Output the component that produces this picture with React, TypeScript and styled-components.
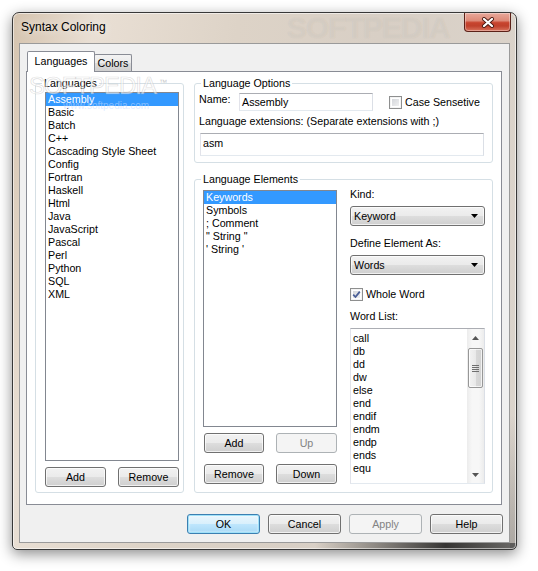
import React from 'react'
import styled, { createGlobalStyle, css } from 'styled-components'

const FACE = '#f0f0f0'

const GlobalStyle = createGlobalStyle`
  * {
    box-sizing: border-box;
  }
  html, body {
    margin: 0;
    padding: 0;
    background: #fff;
  }
  body {
    font-family: "Liberation Sans", Arial, sans-serif;
    font-size: 10.7px;
    color: #000;
  }
`

const Page = styled.div`
  width: 538px;
  height: 571px;
  padding: 12px 0 0 12px;
  overflow: hidden;
`

const Window = styled.div`
  position: relative;
  width: 505px;
  height: 538px;
  display: flex;
  flex-direction: column;
  padding: 0 6px 6px;
  border: 1px solid #383838;
  border-radius: 7px 7px 5px 5px;
  background:
    linear-gradient(90deg, rgba(0, 0, 0, 0) 60%, rgba(25, 25, 25, 0.85) 86%, rgba(70, 70, 70, 0.75) 100%) left bottom / 100% 6px no-repeat,
    linear-gradient(180deg, rgba(255, 255, 255, 0) 75%, rgba(80, 80, 80, 0.35) 100%) right top / 6px 100% no-repeat,
    linear-gradient(100deg, #d5c3ae 0%, #e9dfd4 14%, #ddd3c7 38%, #d8cfc5 62%, #dcd5cd 100%);
  box-shadow: 0 4px 14px rgba(0, 0, 0, 0.45), inset 0 0 0 1px rgba(255, 255, 255, 0.55);
`

const TitleBar = styled.div`
  position: relative;
  height: 30px;
  display: flex;
  align-items: flex-start;
`

const TitleText = styled.div`
  position: relative;
  z-index: 1;
  margin: 7px 0 0 2px;
  font-size: 12px;
  line-height: 15px;
  text-shadow: 0 0 8px rgba(255, 255, 255, 0.9);
`

const TitleMark = styled.div`
  position: absolute;
  left: 268px;
  top: -1px;
  font-size: 30px;
  line-height: 32px;
  font-weight: bold;
  letter-spacing: -1px;
  color: rgba(255, 255, 255, 0.2);
  text-shadow: 0 0 1px rgba(150, 135, 120, 0.22);
  pointer-events: none;
`

const CloseButton = styled.div`
  position: relative;
  z-index: 1;
  margin-left: auto;
  margin-right: -1px;
  width: 47px;
  height: 19px;
  display: flex;
  align-items: center;
  justify-content: center;
  border: 1px solid #5b2118;
  border-top: none;
  border-radius: 0 0 4px 4px;
  background: linear-gradient(180deg, #e9a89a 0%, #dd8a78 42%, #c8442e 54%, #c0412c 72%, #d9735c 100%);
  box-shadow: inset 0 0 0 1px rgba(255, 255, 255, 0.35);
`

const Client = styled.div`
  flex: 1;
  display: flex;
  flex-direction: column;
  background: ${FACE};
  border: 1px solid #9a9a9a;
  padding: 7px 6px 0;
`

const TabStrip = styled.div`
  position: relative;
  z-index: 1;
  height: 20px;
  display: flex;
  align-items: flex-end;
  padding-left: 1px;
`

const Tab = styled.div<{ $active?: boolean; $w: number }>`
  width: ${p => p.$w}px;
  text-align: center;
  border: 1px solid #898c95;
  border-bottom: none;
  border-radius: 2px 2px 0 0;
  ${p =>
    p.$active
      ? css`
          height: 21px;
          margin-bottom: -1px;
          line-height: 19px;
          background: #fff;
        `
      : css`
          height: 17px;
          margin-left: -1px;
          line-height: 16px;
          background: linear-gradient(#f3f3f3 0%, #ebebeb 50%, #dddddd 50%, #cfcfcf 100%);
        `}
`

const TabPanel = styled.div`
  width: 476px;
  height: 434px;
  border: 1px solid #898c95;
  background: #fff;
  padding: 5px 8px 11px;
  display: grid;
  grid-template-columns: 149px 299px;
  column-gap: 10px;
`

const Group = styled.fieldset<{ $pad: string; $row?: boolean; $grow?: boolean }>`
  margin: 0;
  min-width: 0;
  border: 1px solid #d5dfe5;
  border-radius: 3px;
  padding: ${p => p.$pad};
  display: flex;
  flex-direction: ${p => (p.$row ? 'row' : 'column')};
  gap: ${p => (p.$row ? '13px' : '0')};
  flex: ${p => (p.$grow ? 1 : 'none')};
`

const Legend = styled.legend<{ $ml: number }>`
  margin-left: ${p => p.$ml}px;
  padding: 0 2px;
  line-height: 13px;
`

const RightColumn = styled.div`
  display: flex;
  flex-direction: column;
  gap: 10px;
`

const ListBox = styled.div`
  flex: 1;
  border: 1px solid #828790;
  background: #fff;
  overflow: hidden;
`

const ListItem = styled.div<{ $selected?: boolean }>`
  height: 13px;
  line-height: 13px;
  padding-left: 2px;
  white-space: nowrap;
  ${p =>
    p.$selected &&
    css`
      background: #3399ff;
      color: #fff;
    `}
`

const ButtonRow = styled.div<{ $mt: number }>`
  display: flex;
  justify-content: space-between;
  margin-top: ${p => p.$mt}px;
`

const Button = styled.div<{ $w: number; $primary?: boolean; $disabled?: boolean }>`
  width: ${p => p.$w}px;
  height: 20px;
  line-height: 18px;
  text-align: center;
  border: 1px solid #707070;
  border-radius: 3px;
  background: linear-gradient(#f2f2f2 0%, #ebebeb 48%, #dddddd 52%, #cfcfcf 100%);
  box-shadow: inset 0 0 0 1px rgba(255, 255, 255, 0.7);
  ${p =>
    p.$primary &&
    css`
      border-color: #3c7fb1;
      background: linear-gradient(#eaf6fd 0%, #d9f0fc 48%, #bee6fd 52%, #a7d9f5 100%);
      box-shadow: inset 0 0 0 1px #9fe1f9, inset 0 0 2px 1px rgba(255, 255, 255, 0.8);
    `}
  ${p =>
    p.$disabled &&
    css`
      border-color: #adb2b5;
      background: #f4f4f4;
      color: #838383;
      box-shadow: none;
    `}
`

const DialogButtons = styled.div`
  display: flex;
  justify-content: flex-end;
  gap: 8px;
  margin-top: 9px;
`

const FieldRow = styled.div`
  display: flex;
  align-items: center;
  height: 18px;
`

const FieldLabel = styled.div<{ $w?: number; $mt?: number }>`
  ${p => p.$w && `width: ${p.$w}px;`}
  margin-top: ${p => p.$mt ?? 0}px;
  align-self: flex-start;
  line-height: 13px;
  white-space: nowrap;
`

const TextBox = styled.div<{ $w: number; $h: number; $pt?: number }>`
  width: ${p => p.$w}px;
  height: ${p => p.$h}px;
  padding: ${p => p.$pt ?? 0}px 2px 0;
  line-height: ${p => (p.$pt ? 13 : p.$h - 2)}px;
  border: 1px solid;
  border-color: #abadb3 #dbdfe6 #e3e9ef #e2e3ea;
  background: #fff;
`

const ExtBox = styled(TextBox)`
  margin: 5px 0 0 1px;
`

const CheckLine = styled.div<{ $mt?: number }>`
  display: flex;
  align-items: center;
  height: 13px;
  margin-top: ${p => p.$mt ?? 0}px;
  line-height: 13px;
`

const CheckBox = styled.span<{ $ml?: number }>`
  width: 13px;
  height: 13px;
  margin: 0 3px 0 ${p => p.$ml ?? 0}px;
  display: flex;
  align-items: center;
  justify-content: center;
  border: 1px solid #8e8f8f;
  background: linear-gradient(135deg, #cdd0d5 0%, #e6e7e9 60%, #f8f8f8 100%);
  box-shadow: inset 0 0 0 1px #f4f4f4, inset 0 0 0 2px #fff;
`

const ElementsColumn = styled.div<{ $w: number }>`
  width: ${p => p.$w}px;
  display: flex;
  flex-direction: column;
`

const Combo = styled.div<{ $mt: number }>`
  height: 20px;
  margin-top: ${p => p.$mt}px;
  display: flex;
  align-items: center;
  justify-content: space-between;
  padding: 0 6px 0 3px;
  border: 1px solid #707070;
  border-radius: 3px;
  background: linear-gradient(#f2f2f2 0%, #ebebeb 48%, #dddddd 52%, #cfcfcf 100%);
  box-shadow: inset 0 0 0 1px rgba(255, 255, 255, 0.7);
`

const WordBox = styled.div`
  flex: 1;
  margin-top: 5px;
  display: flex;
  border: 1px solid;
  border-color: #abadb3 #dbdfe6 #e3e9ef #e2e3ea;
  background: #fff;
`

const Words = styled.div`
  flex: 1;
  padding: 3px 0 0 2px;
`

const Word = styled.div`
  height: 13px;
  line-height: 13px;
`

const ScrollBar = styled.div`
  width: 17px;
  display: flex;
  flex-direction: column;
  align-items: center;
  background: linear-gradient(90deg, #ececec 0%, #f7f7f7 30%, #f7f7f7 70%, #ececec 100%);
`

const ScrollArrow = styled.div`
  width: 17px;
  height: 17px;
  display: flex;
  align-items: center;
  justify-content: center;
`

const Thumb = styled.div`
  width: 15px;
  height: 40px;
  margin-top: 2px;
  display: flex;
  align-items: center;
  justify-content: center;
  border: 1px solid #979797;
  border-radius: 2px;
  background: linear-gradient(90deg, #f3f3f3 0%, #e9e9e9 50%, #d8d8d8 51%, #d2d2d2 100%);
  box-shadow: inset 0 0 0 1px rgba(255, 255, 255, 0.7);
`

const Spacer = styled.div`
  flex: 1;
`

const PanelMark = styled.div`
  position: absolute;
  left: 16px;
  top: 57px;
  font-size: 24px;
  line-height: 26px;
  letter-spacing: -1px;
  color: rgba(255, 255, 255, 0.55);
  -webkit-text-stroke: 0.7px rgba(170, 170, 170, 0.4);
  pointer-events: none;

  sup {
    font-size: 8px;
    -webkit-text-stroke: 0;
    color: rgba(160, 160, 160, 0.6);
    margin-left: 3px;
  }
`

const SiteMark = styled.div`
  position: absolute;
  left: 50px;
  top: 86px;
  font-size: 10px;
  line-height: 13px;
  color: rgba(200, 220, 255, 0.55);
  pointer-events: none;
`

const languages = [
  'Assembly', 'Basic', 'Batch', 'C++', 'Cascading Style Sheet', 'Config', 'Fortran', 'Haskell',
  'Html', 'Java', 'JavaScript', 'Pascal', 'Perl', 'Python', 'SQL', 'XML',
]

const elements = ['Keywords', 'Symbols', '; Comment', '" String "', "' String '"]

const words = ['call', 'db', 'dd', 'dw', 'else', 'end', 'endif', 'endm', 'endp', 'ends', 'equ']

const Triangle = ({ up, color }: { up?: boolean; color: string }) => (
  <svg width="7" height="4" viewBox="0 0 7 4">
    <path d={up ? 'M0 4h7L3.5 0z' : 'M0 0h7L3.5 4z'} fill={color} />
  </svg>
)

const CheckMark = () => (
  <svg width="9" height="9" viewBox="0 0 9 9">
    <path d="M1.2 4.6 L3.5 7 L7.8 1.6" fill="none" stroke="#4a5f97" strokeWidth="1.8" />
  </svg>
)

const CloseGlyph = () => (
  <svg width="14" height="11" viewBox="0 0 14 11">
    <path d="M3 2 L11 9 M11 2 L3 9" stroke="#4a1810" strokeWidth="4" strokeLinecap="round" />
    <path d="M3 2 L11 9 M11 2 L3 9" stroke="#fff" strokeWidth="2.3" strokeLinecap="round" />
  </svg>
)

const Grip = () => (
  <svg width="7" height="7" viewBox="0 0 7 7">
    <path d="M0 0.5h7M0 2.5h7M0 4.5h7M0 6.5h7" stroke="#6f6f6f" strokeWidth="1" />
  </svg>
)

const App = () => (
  <Page>
    <GlobalStyle />
    <Window>
      <TitleBar>
        <TitleMark>SOFTPEDIA</TitleMark>
        <TitleText>Syntax Coloring</TitleText>
        <CloseButton>
          <CloseGlyph />
        </CloseButton>
      </TitleBar>

      <Client>
        <TabStrip>
          <Tab $active $w={68}>Languages</Tab>
          <Tab $w={38}>Colors</Tab>
        </TabStrip>

        <TabPanel>
          <Group $pad="2px 4px 5px 9px">
            <Legend $ml={-3}>Languages</Legend>
            <ListBox>
              {languages.map((l, i) => (
                <ListItem key={l} $selected={i === 0}>{l}</ListItem>
              ))}
            </ListBox>
            <ButtonRow $mt={6}>
              <Button $w={61}>Add</Button>
              <Button $w={61}>Remove</Button>
            </ButtonRow>
          </Group>

          <RightColumn>
            <Group $pad="3px 8px 6px 4px">
              <Legend $ml={2}>Language Options</Legend>
              <FieldRow>
                <FieldLabel $w={40}>Name:</FieldLabel>
                <TextBox $w={134} $h={18}>Assembly</TextBox>
                <CheckBox $ml={16} />
                <span>Case Sensetive</span>
              </FieldRow>
              <FieldLabel $mt={4}>Language extensions: (Separate extensions with ;)</FieldLabel>
              <ExtBox $w={284} $h={23} $pt={3}>asm</ExtBox>
            </Group>

            <Group $pad="4px 7px 8px 8px" $row $grow>
              <Legend $ml={-2}>Language Elements</Legend>
              <ElementsColumn $w={134}>
                <ListBox>
                  {elements.map((e, i) => (
                    <ListItem key={e} $selected={i === 0}>{e}</ListItem>
                  ))}
                </ListBox>
                <ButtonRow $mt={6}>
                  <Button $w={60} style={{ marginLeft: 1 }}>Add</Button>
                  <Button $w={61} $disabled>Up</Button>
                </ButtonRow>
                <ButtonRow $mt={11}>
                  <Button $w={60} style={{ marginLeft: 1 }}>Remove</Button>
                  <Button $w={61}>Down</Button>
                </ButtonRow>
              </ElementsColumn>

              <ElementsColumn $w={135}>
                <FieldLabel $mt={-2}>Kind:</FieldLabel>
                <Combo $mt={5}>
                  <span>Keyword</span>
                  <Triangle color="#000" />
                </Combo>
                <FieldLabel $mt={11}>Define Element As:</FieldLabel>
                <Combo $mt={5}>
                  <span>Words</span>
                  <Triangle color="#000" />
                </Combo>
                <CheckLine $mt={13}>
                  <CheckBox>
                    <CheckMark />
                  </CheckBox>
                  <span>Whole Word</span>
                </CheckLine>
                <FieldLabel $mt={9}>Word List:</FieldLabel>
                <WordBox>
                  <Words>
                    {words.map(w => (
                      <Word key={w}>{w}</Word>
                    ))}
                  </Words>
                  <ScrollBar>
                    <ScrollArrow>
                      <Triangle up color="#555" />
                    </ScrollArrow>
                    <Thumb>
                      <Grip />
                    </Thumb>
                    <Spacer />
                    <ScrollArrow>
                      <Triangle color="#555" />
                    </ScrollArrow>
                  </ScrollBar>
                </WordBox>
              </ElementsColumn>
            </Group>
          </RightColumn>
        </TabPanel>

        <DialogButtons>
          <Button $w={73} $primary>OK</Button>
          <Button $w={73}>Cancel</Button>
          <Button $w={73} $disabled>Apply</Button>
          <Button $w={73}>Help</Button>
        </DialogButtons>
      </Client>

      <PanelMark>
        SOFTPEDIA<sup>™</sup>
      </PanelMark>
      <SiteMark>www.softpedia.com</SiteMark>
    </Window>
  </Page>
)

export default App
